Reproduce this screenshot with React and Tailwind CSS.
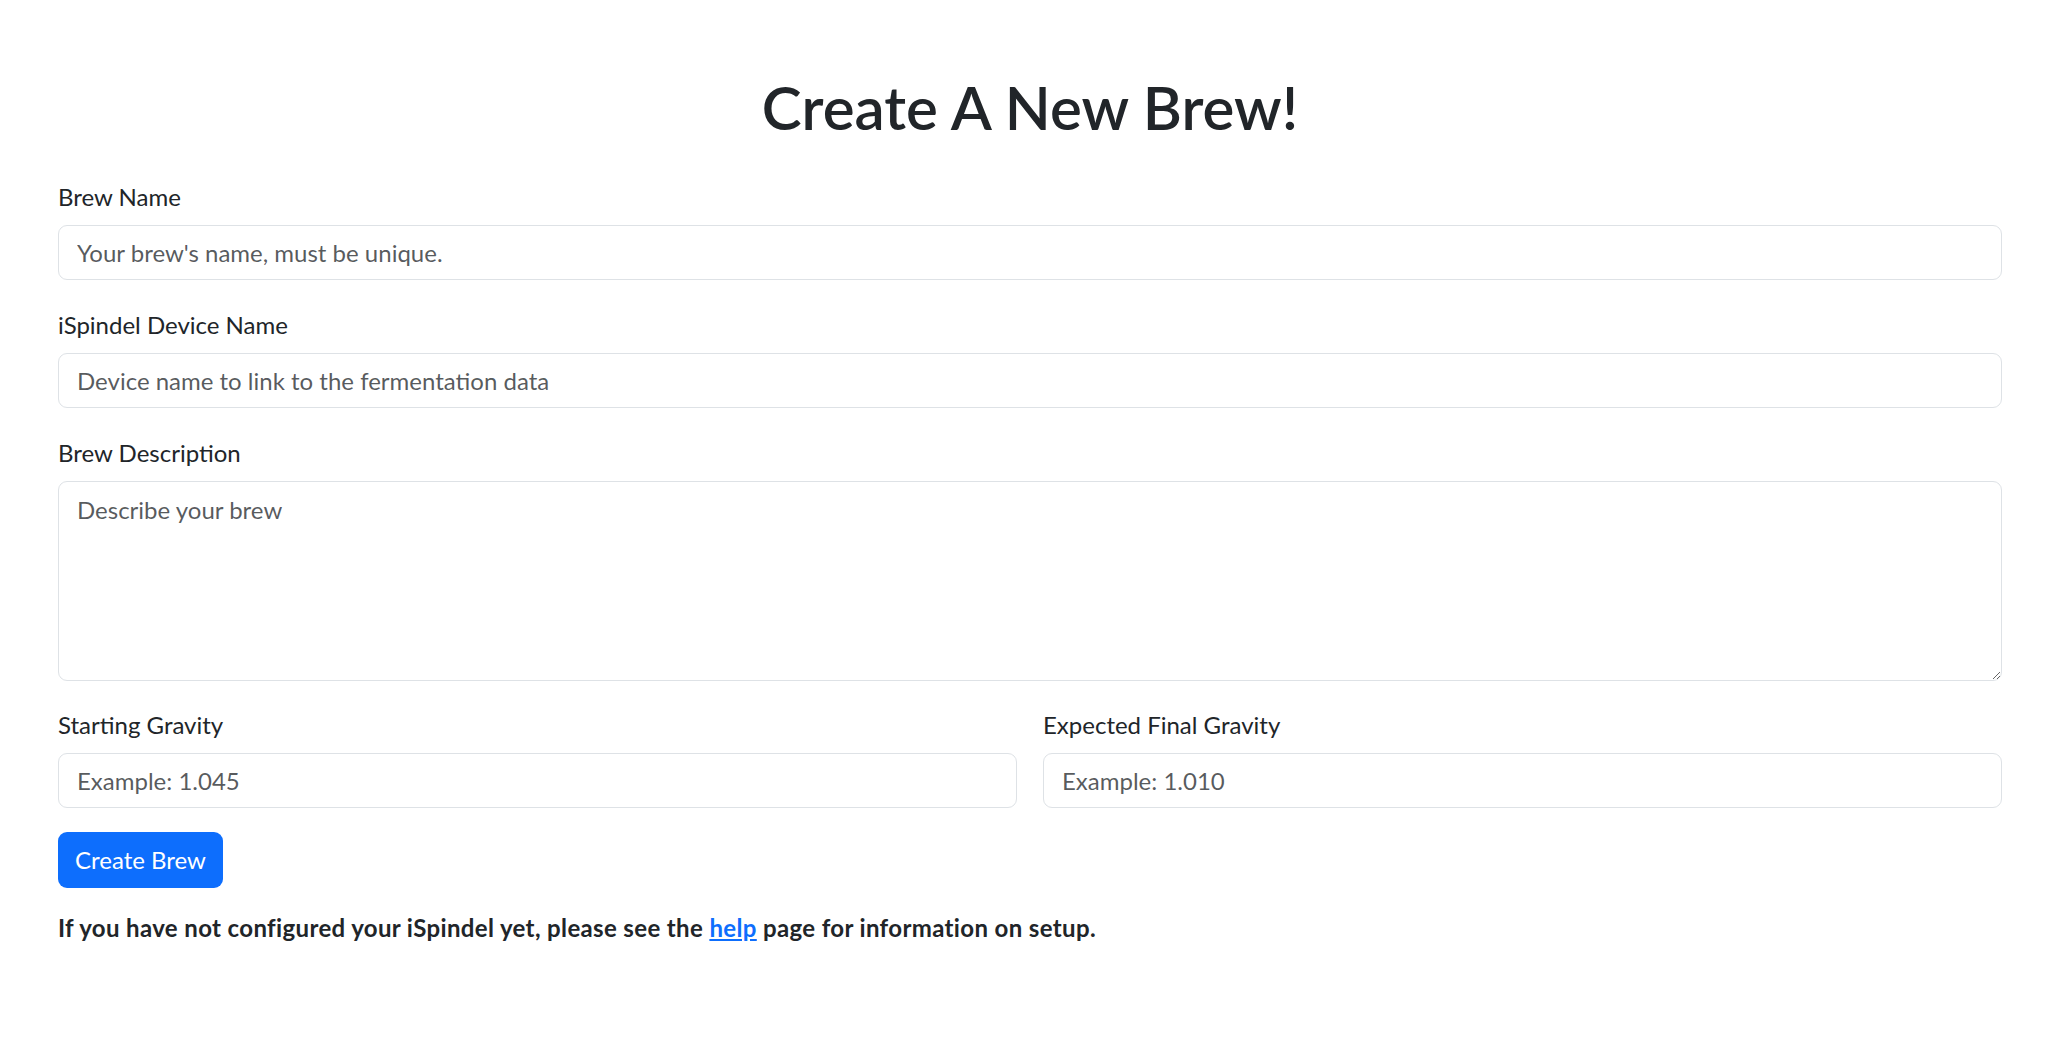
export default function App() {
  const inputCls =
    "h-[55px] w-full rounded-[9px] border border-[#dee2e6] px-[18px] text-[24px] leading-[36px] outline-none placeholder:text-[rgba(33,37,41,0.75)]";
  const labelCls = "text-[24px] leading-[36px] mb-[10px]";
  return (
    <div className="min-h-screen bg-white text-[#212529] font-['Lato',sans-serif]">
      <div className="ml-[58px] w-[1944px] pt-[71px]">
        <h1 className="text-center text-[60px] leading-[72px] font-semibold">Create A New Brew!</h1>
        <form className="mt-[36px] flex flex-col" onSubmit={(e) => e.preventDefault()}>
          <div className="flex flex-col">
            <label className={labelCls}>Brew Name</label>
            <input type="text" placeholder="Your brew's name, must be unique." className={inputCls} />
          </div>
          <div className="mt-[27px] flex flex-col">
            <label className={labelCls}>iSpindel Device Name</label>
            <input type="text" placeholder="Device name to link to the fermentation data" className={inputCls} />
          </div>
          <div className="mt-[27px] flex flex-col">
            <label className={labelCls}>Brew Description</label>
            <textarea
              placeholder="Describe your brew"
              className="block h-[200px] w-full rounded-[9px] border border-[#dee2e6] px-[18px] py-[10px] text-[24px] leading-[36px] outline-none placeholder:text-[rgba(33,37,41,0.75)]"
            />
          </div>
          <div className="mt-[26px] grid grid-cols-2 gap-[26px]">
            <div className="flex flex-col">
              <label className={labelCls}>Starting Gravity</label>
              <input type="text" placeholder="Example: 1.045" className={inputCls} />
            </div>
            <div className="flex flex-col">
              <label className={labelCls}>Expected Final Gravity</label>
              <input type="text" placeholder="Example: 1.010" className={inputCls} />
            </div>
          </div>
          <div className="mt-[24px]">
            <button
              type="submit"
              className="h-[56px] w-[165px] rounded-[9px] bg-[#0d6efd] text-white text-[24px] leading-[36px]"
            >
              Create Brew
            </button>
          </div>
        </form>
        <p className="mt-[22px] text-[24px] leading-[36px] font-bold tracking-[0.36px]">
          If you have not configured your iSpindel yet, please see the{" "}
          <a href="#" className="text-[#0d6efd] underline">help</a> page for information on setup.
        </p>
      </div>
    </div>
  );
}
